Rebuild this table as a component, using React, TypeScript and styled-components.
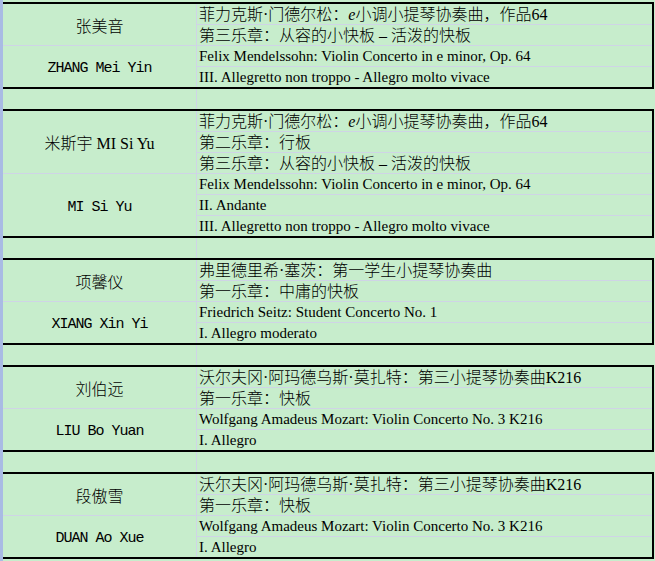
import React from 'react';
import styled, { createGlobalStyle } from 'styled-components';

const sheet = {
  fill: '#c7edcc',
  grid: '#cfd4e6',
  header: '#a9bbe4',
  border: '#000000',
};

type Entry = {
  name: string;
  pinyin: string;
  lines: { text: React.ReactNode; latin?: boolean }[];
};

const Op64 = (
  <>
    菲力克斯·门德尔松：<i>e</i>小调小提琴协奏曲，作品64
  </>
);

const K216 = '沃尔夫冈·阿玛德乌斯·莫扎特：第三小提琴协奏曲K216';

const entries: Entry[] = [
  {
    name: '张美音',
    pinyin: 'ZHANG Mei Yin',
    lines: [
      { text: Op64 },
      { text: '第三乐章：从容的小快板 – 活泼的快板' },
      { text: 'Felix Mendelssohn: Violin Concerto in e minor, Op. 64', latin: true },
      { text: 'III. Allegretto non troppo - Allegro molto vivace', latin: true },
    ],
  },
  {
    name: '米斯宇 MI Si Yu',
    pinyin: 'MI Si Yu',
    lines: [
      { text: Op64 },
      { text: '第二乐章：行板' },
      { text: '第三乐章：从容的小快板 – 活泼的快板' },
      { text: 'Felix Mendelssohn: Violin Concerto in e minor, Op. 64', latin: true },
      { text: 'II. Andante', latin: true },
      { text: 'III. Allegretto non troppo - Allegro molto vivace', latin: true },
    ],
  },
  {
    name: '项馨仪',
    pinyin: 'XIANG Xin Yi',
    lines: [
      { text: '弗里德里希·塞茨：第一学生小提琴协奏曲' },
      { text: '第一乐章：中庸的快板' },
      { text: 'Friedrich Seitz: Student Concerto No. 1', latin: true },
      { text: 'I. Allegro moderato', latin: true },
    ],
  },
  {
    name: '刘伯远',
    pinyin: 'LIU Bo Yuan',
    lines: [
      { text: K216 },
      { text: '第一乐章：快板' },
      { text: 'Wolfgang Amadeus Mozart: Violin Concerto No. 3 K216', latin: true },
      { text: 'I. Allegro', latin: true },
    ],
  },
  {
    name: '段傲雪',
    pinyin: 'DUAN Ao Xue',
    lines: [
      { text: K216 },
      { text: '第一乐章：快板' },
      { text: 'Wolfgang Amadeus Mozart: Violin Concerto No. 3 K216', latin: true },
      { text: 'I. Allegro', latin: true },
    ],
  },
];

const App = () => {
  return (
    <>
      <GlobalStyle />
      <Sheet>
        <TopSliver />
        {entries.map((entry, i) => {
          const half = entry.lines.length / 2;
          return (
            <React.Fragment key={entry.pinyin}>
              {i > 0 && (
                <GapRow>
                  <GapCell />
                  <GapCell />
                </GapRow>
              )}
              <Group>
                <NameCell $span={half}>{entry.name}</NameCell>
                {entry.lines.slice(0, half).map((line, j) => (
                  <LineCell key={'a' + j} $latin={line.latin}>
                    {line.text}
                  </LineCell>
                ))}
                <PinyinCell $span={half}>{entry.pinyin}</PinyinCell>
                {entry.lines.slice(half).map((line, j) => (
                  <LineCell key={'b' + j} $latin={line.latin}>
                    {line.text}
                  </LineCell>
                ))}
              </Group>
            </React.Fragment>
          );
        })}
      </Sheet>
    </>
  );
};

export default App;

const GlobalStyle = createGlobalStyle`
  html, body {
    margin: 0;
    padding: 0;
    background: ${sheet.fill};
    overflow: hidden;
  }
  body {
    font-family: "Liberation Serif", "Noto Sans CJK SC", serif;
    color: #000;
  }
  i {
    font-style: italic;
  }
`;

const Sheet = styled.div`
  width: 651px;
  height: 561px;
  border-left: 3px solid ${sheet.header};
  display: flex;
  flex-direction: column;
`;

const TopSliver = styled.div`
  height: 2px;
  flex: none;
`;

const Group = styled.div`
  flex: none;
  display: grid;
  grid-template-columns: 193px 1fr;
  grid-auto-rows: 20px;
  grid-auto-flow: row dense;
  gap: 1px;
  background: ${sheet.grid};
  border-top: 2px solid ${sheet.border};
  border-bottom: 2px solid ${sheet.border};
  border-right: 2px solid ${sheet.border};
`;

const GapRow = styled.div`
  flex: none;
  height: 20px;
  display: grid;
  grid-template-columns: 193px 1fr;
  gap: 1px;
  background: ${sheet.grid};
`;

const GapCell = styled.div`
  background: ${sheet.fill};
`;

const NameCell = styled.div<{ $span: number }>`
  grid-column: 1;
  grid-row: span ${(p) => p.$span};
  background: ${sheet.fill};
  display: flex;
  align-items: center;
  justify-content: center;
  font-family: "Liberation Serif", "Noto Sans CJK SC", serif;
  font-size: 16px;
  font-weight: 300;
  white-space: nowrap;
`;

const PinyinCell = styled(NameCell)`
  padding-top: 4px;
  font-family: "Liberation Mono", "DejaVu Sans Mono", monospace;
  font-size: 15px;
  font-weight: 400;
  letter-spacing: -1px;
`;

const LineCell = styled.div<{ $latin?: boolean }>`
  grid-column: 2;
  background: ${sheet.fill};
  display: flex;
  align-items: flex-end;
  padding: 0 0 ${(p) => (p.$latin ? '1px' : '0')} 2px;
  font-family: "Liberation Serif", "Noto Sans CJK SC", serif;
  font-size: ${(p) => (p.$latin ? '15px' : '16px')};
  font-weight: ${(p) => (p.$latin ? 400 : 300)};
  line-height: ${(p) => (p.$latin ? '17px' : '19px')};
  white-space: nowrap;
  overflow: hidden;
`;
